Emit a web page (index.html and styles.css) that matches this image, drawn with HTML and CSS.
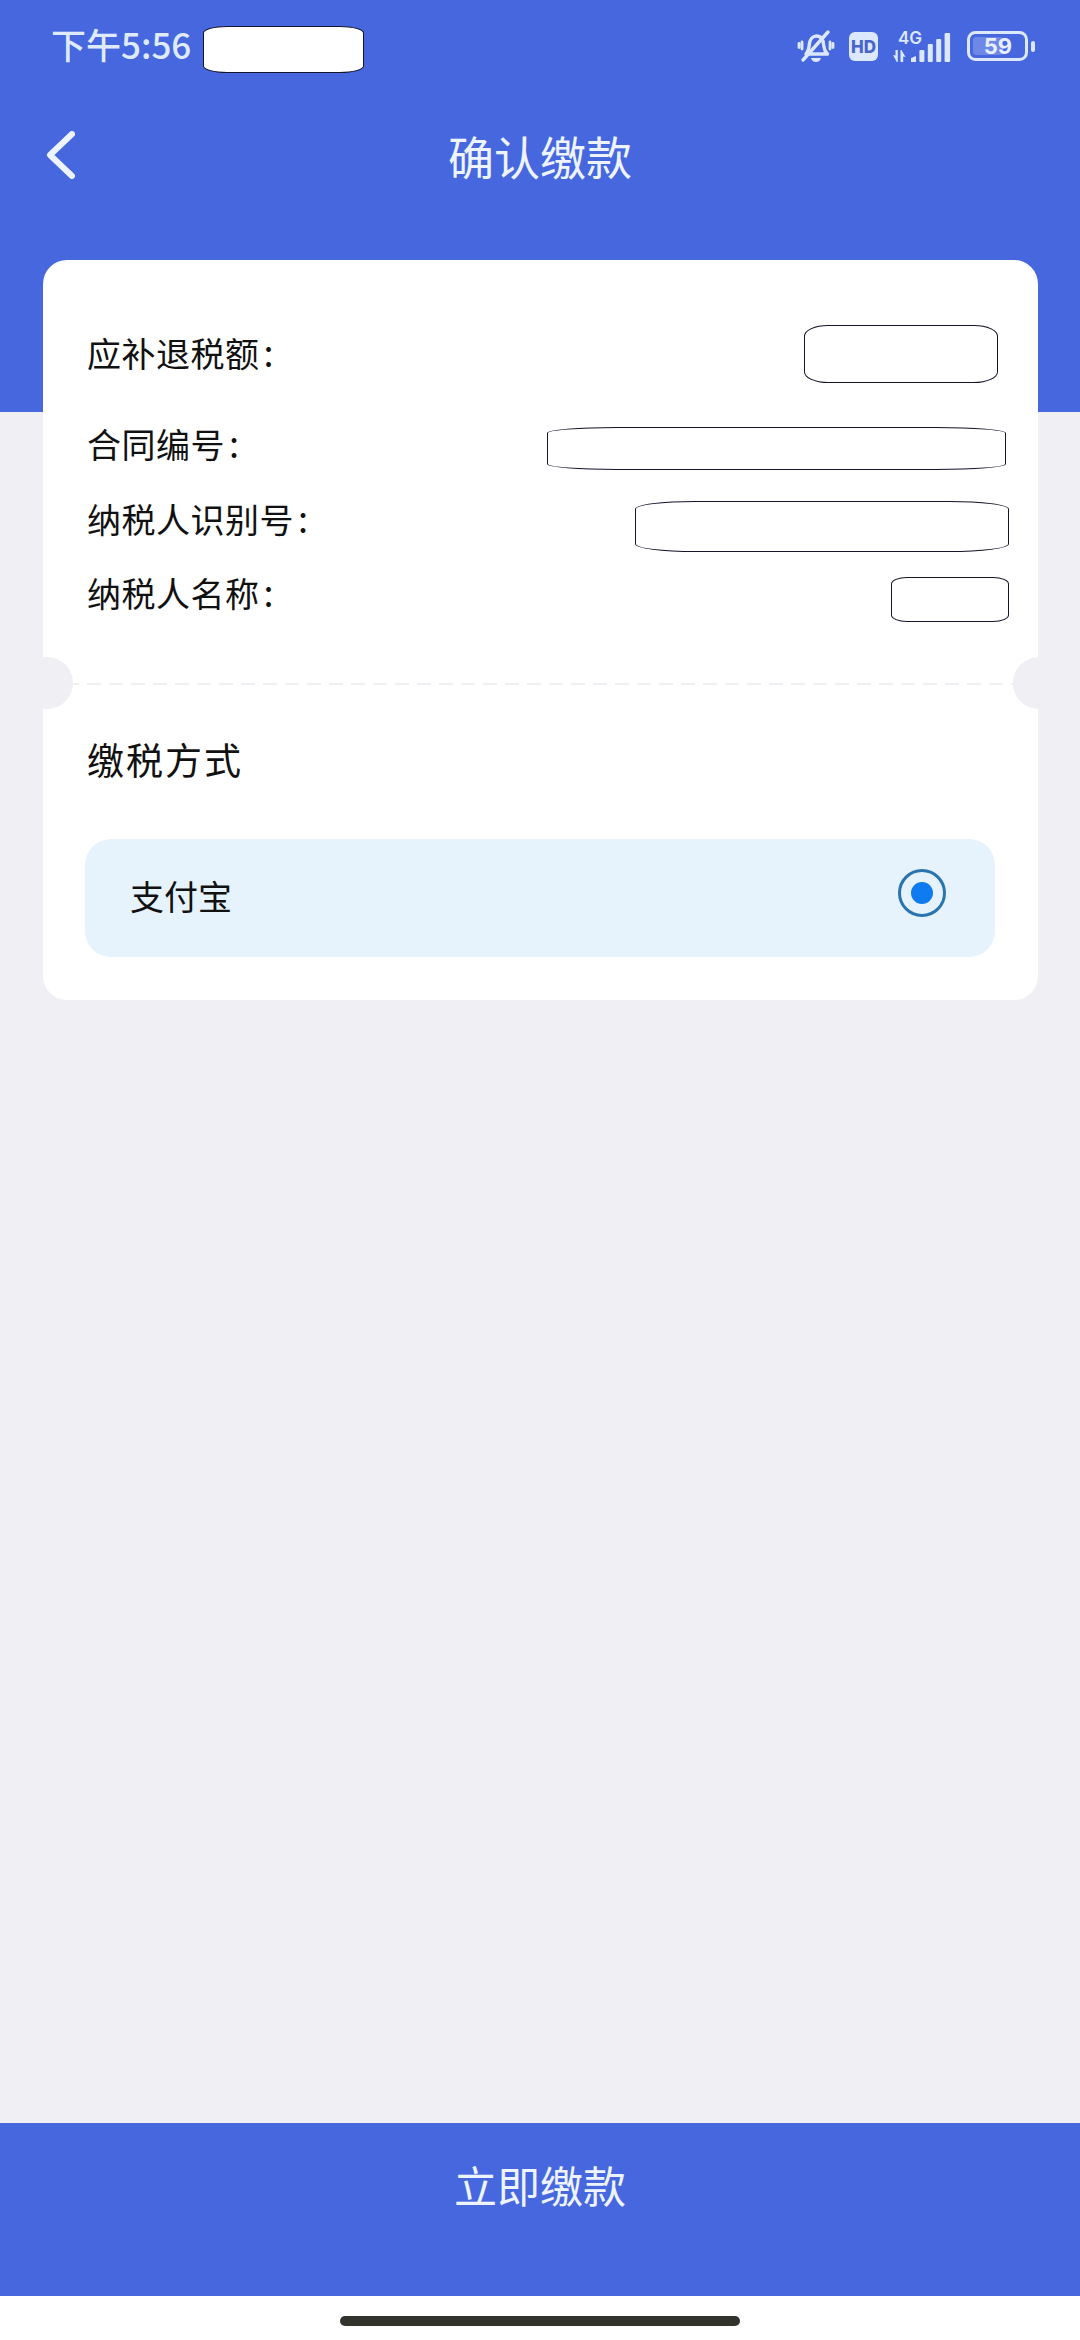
FILE: index.html
```html
<!DOCTYPE html>
<html lang="zh-CN">
<head>
<meta charset="utf-8">
<title>确认缴款</title>
<link rel="stylesheet" href="styles.css">
</head>
<body>
<div class="page">
  <header class="header">
    <div class="status-bar">
      <div class="status-left">
        <span class="time">下午5:56</span>
        <span class="mask mask-status"></span>
      </div>
      <div class="status-icons">
        <svg class="icon-bell" viewBox="0 0 36 34" width="36" height="34">
          <g fill="none" stroke="#dce8ff" stroke-width="3.400" stroke-linecap="round" stroke-linejoin="round">
            <path d="M8 25c2.500-2.500 3-6 3.500-10.500C12 10 15 7 18.500 7c3 0 5.500 2 6.500 5l1 6c.4 3 1.500 5 3.500 7z"/>
            <path d="M5 31L30 3"/>
            <path d="M4 13v7M1 14.500v4M32 13v7M35 14.500v4" stroke-width="2.800"/>
          </g>
          <path d="M13 29h10c-1 3-3 4-5 4s-4-1-5-4z" fill="#dce8ff"/>
        </svg>
        <svg class="icon-hd" viewBox="0 0 29 29" width="29" height="29">
          <rect width="29" height="29" rx="6" fill="#dce8ff"/>
          <text x="14.500" y="20.500" class="hd-text">HD</text>
        </svg>
        <svg class="icon-net" viewBox="0 0 59 33" width="59" height="33">
          <text x="5" y="14" class="net-text">4G</text>
          <g fill="#dce8ff">
            <path d="M0 25l2.500 .5V20h2.300v12H3.800z"/>
            <path d="M7.500 20h1l4 7-2.300-.5V32H7.500z"/>
            <path d="M18 28l5-2v6h-5z"/>
            <rect x="26.400" y="20" width="5" height="12" rx="1"/>
            <rect x="34.800" y="14" width="5" height="18" rx="1"/>
            <rect x="43.200" y="9" width="5" height="23" rx="1"/>
            <rect x="51.600" y="3" width="5.500" height="29" rx="1"/>
          </g>
        </svg>
        <svg class="icon-batt" viewBox="0 0 68 30" width="68" height="30">
          <rect x="1.500" y="1.500" width="58" height="27" rx="7" fill="none" stroke="#dce8ff" stroke-width="3"/>
          <rect x="6" y="6" width="30" height="18" rx="3" fill="#6f88e6"/>
          <rect x="64" y="10" width="4" height="11" rx="2" fill="#dce8ff"/>
          <text x="31" y="23" class="batt-text">59</text>
        </svg>
      </div>
    </div>
    <nav class="nav">
      <svg class="back" viewBox="0 0 29 48" width="29" height="48">
        <path d="M26 3L4 24l22 21" fill="none" stroke="#eef4ff" stroke-width="6" stroke-linecap="round" stroke-linejoin="round"/>
      </svg>
      <h1 class="title">确认缴款</h1>
    </nav>
  </header>

  <main class="main">
    <section class="card">
      <div class="info">
        <div class="row row-amount">
          <span class="label">应补退税额<span class="colon">:</span></span>
          <span class="mask mask-amount"></span>
        </div>
        <div class="row row-contract">
          <span class="label">合同编号<span class="colon">:</span></span>
          <span class="mask mask-contract"></span>
        </div>
        <div class="row row-taxid">
          <span class="label">纳税人识别号<span class="colon">:</span></span>
          <span class="mask mask-taxid"></span>
        </div>
        <div class="row row-name">
          <span class="label">纳税人名称<span class="colon">:</span></span>
          <span class="mask mask-name"></span>
        </div>
      </div>
      <div class="divider">
        <span class="notch notch-left"></span>
        <span class="notch notch-right"></span>
      </div>
      <div class="method">
        <h2 class="method-title">缴税方式</h2>
        <div class="option">
          <span class="option-name">支付宝</span>
          <span class="radio"><span class="radio-dot"></span></span>
        </div>
      </div>
    </section>
  </main>

  <footer class="footer">
    <div class="pay"><span class="pay-text">立即缴款</span></div>
    <div class="home-area"><span class="home-bar"></span></div>
  </footer>
</div>
</body>
</html>
```
FILE: styles.css
```css
* { box-sizing: border-box; }
html, body { margin: 0; padding: 0; }
body {
  width: 1080px;
  height: 2340px;
  overflow: hidden;
  background: #efeff4;
  font-family: "Noto Sans CJK SC", "Noto Sans", sans-serif;
  color: #111;
}
.page {
  height: 2340px;
  display: flex;
  flex-direction: column;
}
.header {
  height: 412px;
  flex: none;
  background: #4667dd;
}
.status-bar {
  height: 92px;
  padding: 0 45px 0 51px;
  display: flex;
  align-items: center;
  justify-content: space-between;
}
.status-left {
  display: flex;
  align-items: center;
  gap: 12px;
}
.time {
  margin-top: -6px;
  font-size: 35px;
  font-weight: 500;
  line-height: 1;
  color: #dfeaff;
}
.status-icons {
  display: flex;
  align-items: center;
  gap: 15px;
}
.status-icons svg { display: block; overflow: visible; }
.hd-text {
  font-family: "Inter", "Noto Sans", sans-serif;
  font-size: 17px;
  font-weight: 800;
  fill: #4a65c8;
  text-anchor: middle;
}
.net-text {
  font-family: "Inter", "Noto Sans", sans-serif;
  font-size: 17px;
  font-weight: 600;
  fill: #dce8ff;
}
.batt-text {
  font-family: "Inter", "Noto Sans", sans-serif;
  font-size: 22px;
  font-weight: 700;
  fill: #e8f0ff;
  text-anchor: middle;
}
.nav {
  height: 126px;
  padding-left: 46px;
  display: flex;
  align-items: center;
  position: relative;
}
.back { display: block; }
.title {
  margin: 0;
  position: absolute;
  left: 0;
  right: 0;
  text-align: center;
  font-size: 46px;
  font-weight: 400;
  line-height: 1;
  color: #eef4ff;
}
.mask {
  display: block;
  flex: none;
  background: #fff;
  border: 1.500px solid #14142a;
}
.mask-status { width: 161px; height: 47px; margin-top: 7px; border-radius: 24px / 7px; }
.mask-amount { width: 194px; height: 58px; margin-right: 40px; border-radius: 24px / 11px; }
.mask-contract { width: 459px; height: 43px; margin-right: 32px; border-radius: 70px / 6px; }
.mask-taxid { width: 374px; height: 51px; margin-right: 29px; border-radius: 60px / 8px; }
.mask-name { width: 118px; height: 45px; margin-right: 29px; border-radius: 16px / 7px; }

.main {
  flex: 1;
  padding: 0 42px 0 43px;
  margin-top: -152px;
}
.card {
  background: #fff;
  border-radius: 24px;
}
.info {
  padding: 65px 0 0 44px;
  display: flex;
  flex-direction: column;
}
.row {
  display: flex;
  align-items: flex-start;
  justify-content: space-between;
}
.row-amount { height: 58px; }
.row-contract { height: 43px; margin-top: 44px; }
.row-taxid { height: 51px; margin-top: 31px; }
.row-name { height: 45px; margin-top: 25px; }
.label {
  font-size: 34px;
  line-height: 1;
  letter-spacing: 0.5px;
}
.colon { margin-left: 4px; font-size: 36px; }
.row-amount .label { margin-top: 8px; }
.row-contract .label { margin-top: -3px; }
.row-taxid .label { margin-top: -2px; }
.row-name .label { margin-top: -4px; }
.divider {
  height: 2px;
  margin-top: 61px;
  position: relative;
  background: repeating-linear-gradient(to right, #efeff4 0 14px, transparent 14px 22px);
}
.notch {
  position: absolute;
  top: -26px;
  width: 52px;
  height: 52px;
  border-radius: 50%;
  background: #efeff4;
}
.notch-left { left: -22px; }
.notch-right { right: -1px; transform: translateX(26px); }
.method {
  padding: 0 43px 43px 42px;
}
.method-title {
  margin: 0 0 0 2px;
  padding-top: 51px;
  padding-bottom: 2px;
  font-size: 37px;
  font-weight: 400;
  line-height: 46px;
  letter-spacing: 2px;
}
.option {
  margin-top: 55px;
  height: 118px;
  padding: 0 49px 0 45px;
  background: #e6f3fc;
  border-radius: 26px;
  display: flex;
  align-items: center;
  justify-content: space-between;
}
.option-name {
  font-size: 34px;
  line-height: 1;
  margin-bottom: 5px;
}
.radio {
  width: 48px;
  height: 48px;
  margin-top: -10px;
  border: 3.500px solid #2a74b0;
  border-radius: 50%;
  display: flex;
  align-items: center;
  justify-content: center;
}
.radio-dot {
  width: 22px;
  height: 22px;
  border-radius: 50%;
  background: #0f7bf0;
}
.footer {
  flex: none;
  background: #fff;
}
.pay {
  height: 173px;
  padding-bottom: 50px;
  background: #4667dd;
  display: flex;
  align-items: center;
  justify-content: center;
}
.pay-text {
  font-size: 43px;
  line-height: 1;
  color: #eef4ff;
}
.home-area {
  height: 44px;
  padding-top: 20px;
  display: flex;
  justify-content: center;
}
.home-bar {
  width: 400px;
  height: 10px;
  border-radius: 5px;
  background: #33332d;
}
```
